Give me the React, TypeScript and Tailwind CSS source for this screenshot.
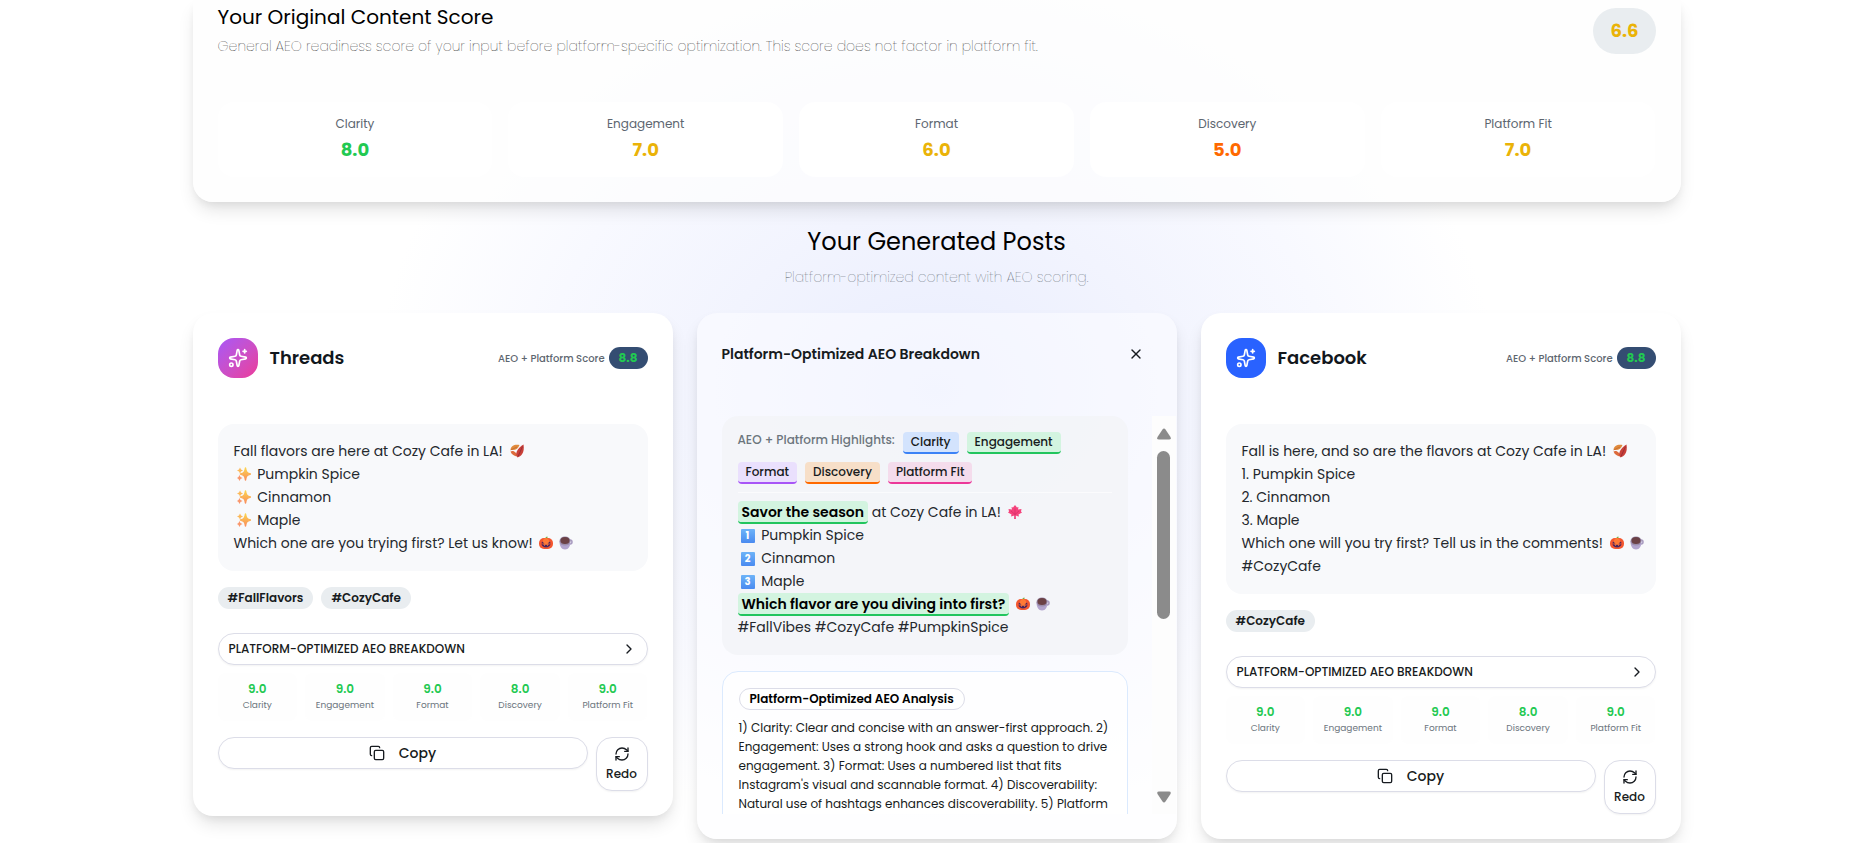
import { useState } from "react";
import type { ReactNode } from "react";
import { ChevronRight, Copy, RefreshCw, Sparkles, X } from "lucide-react";

type Score = { label: string; value: string; color: string };

const originalScores: Score[] = [
  { label: "Clarity", value: "8.0", color: "text-[#22c951]" },
  { label: "Engagement", value: "7.0", color: "text-[#eab308]" },
  { label: "Format", value: "6.0", color: "text-[#eab308]" },
  { label: "Discovery", value: "5.0", color: "text-[#ff6900]" },
  { label: "Platform Fit", value: "7.0", color: "text-[#eab308]" },
];

const postScores = [
  { label: "Clarity", value: "9.0" },
  { label: "Engagement", value: "9.0" },
  { label: "Format", value: "9.0" },
  { label: "Discovery", value: "8.0" },
  { label: "Platform Fit", value: "9.0" },
];

const highlights = [
  { label: "Clarity", className: "bg-[#d3e3fd] border-[#3b82f6]" },
  { label: "Engagement", className: "bg-[#d3f4e0] border-[#22c55e]" },
  { label: "Format", className: "bg-[#eae0fd] border-[#a855f7]" },
  { label: "Discovery", className: "bg-[#f7dfc8] border-[#ff6900]" },
  { label: "Platform Fit", className: "bg-[#f4dcec] border-[#ec3899]" },
];

const cardClass =
  "rounded-[20px] shadow-[0_10px_18px_-3px_rgba(0,0,0,0.12),0_4px_8px_-2px_rgba(0,0,0,0.06)]";

const emojiClass = "mx-[3px] inline-block size-[14px] align-[-2px]";

function FallenLeaf() {
  return (
    <svg viewBox="0 0 28 28" className={emojiClass} role="img" aria-label="fallen leaf">
      <path d="M1 11C2 4 9 0 19 2C17 9 11 13 3 12Z" fill="#e08a3c" />
      <path d="M1 12L14 6" stroke="#b9602b" strokeWidth="1.2" />
      <path d="M1 15C4 13 9 14 11 17L16 22L13 25C8 23 3 21 1 15Z" fill="#dd6b3b" />
      <path d="M27 1C29 13 26 24 15 27C9 20 14 9 27 1Z" fill="#c94038" />
      <path d="M25 5L16 25" stroke="#8f2a35" strokeWidth="1.6" />
    </svg>
  );
}

function MapleLeaf() {
  return (
    <svg viewBox="0 0 28 28" className={emojiClass} role="img" aria-label="maple leaf">
      <path
        d="M14 0L18 5L21 4L20 9L27 8L26 13L28 15L21 19L22 23L15 21L16 28H12L13 21L6 23L7 19L0 15L2 13L1 8L8 9L7 4L10 5Z"
        fill="#f5437c"
      />
      <path d="M14 7V25M14 19L6 12M14 19L22 12" stroke="#d92b68" strokeWidth="1.4" fill="none" />
    </svg>
  );
}

function Stars() {
  return (
    <svg viewBox="0 0 28 28" className={emojiClass} role="img" aria-label="sparkles">
      <defs>
        <linearGradient id="star" x1="0" y1="0" x2="0" y2="1">
          <stop offset="0" stopColor="#fcd34d" />
          <stop offset="1" stopColor="#f98e5c" />
        </linearGradient>
      </defs>
      <path
        d="M17 2C18 10 20 12 27 14C20 16 18 18 17 26C16 18 14 16 7 14C14 12 16 10 17 2Z"
        fill="url(#star)"
        stroke="url(#star)"
        strokeWidth="3"
        strokeLinejoin="round"
      />
      <path d="M6 1L8 5L12 7L8 9L6 13L4 9L0 7L4 5Z" fill="#fbb95a" />
      <path d="M5 16L7 20L11 22L7 24L5 28L3 24L0 22L3 20Z" fill="#f9966b" />
    </svg>
  );
}

function Pumpkin() {
  return (
    <svg viewBox="0 0 28 28" className={emojiClass} role="img" aria-label="jack-o-lantern">
      <path d="M13 6C12 3 14 1 17 1L17 6Z" fill="#7cab45" />
      <rect x="0" y="4" width="28" height="22" rx="10" fill="#f4572f" />
      <ellipse cx="14" cy="14" rx="7" ry="10" fill="#ff7a35" />
      <path d="M6 11L11 15H5ZM22 11L17 15H23Z" fill="#45225f" />
      <path d="M5 16C8 18 20 18 23 16C22 25 6 25 5 16Z" fill="#45225f" />
      <path d="M9 17L11 20L13 17M15 17L17 20L19 17" fill="#ff7a35" />
    </svg>
  );
}

function Coffee() {
  return (
    <svg viewBox="0 0 28 28" className={emojiClass} role="img" aria-label="hot beverage">
      <circle cx="22" cy="12" r="4" fill="none" stroke="#a79abf" strokeWidth="3" />
      <path d="M1 10C1 21 5 27 12 27C19 27 23 21 23 10Z" fill="#b3a5cf" />
      <ellipse cx="12" cy="10" rx="11" ry="9" fill="#9a8cab" />
      <ellipse cx="12" cy="9" rx="9" ry="7" fill="#6b4146" />
    </svg>
  );
}

function Keycap({ digit }: { digit: string }) {
  return (
    <span className="mx-[3px] inline-flex size-[14px] items-center justify-center rounded-[1px] bg-gradient-to-b from-[#6db3f8] to-[#4a8af0] align-[1px] text-[10px] leading-none font-bold text-white">
      {digit}
    </span>
  );
}

function Mark({ children }: { children: ReactNode }) {
  return (
    <mark className="rounded-[4px] border-b-2 border-[#22c55e] bg-[#d3f4e0] px-1 pt-px font-semibold text-black">
      {children}
    </mark>
  );
}

function PostCard({
  name,
  iconClass,
  tags,
  children,
}: {
  name: string;
  iconClass: string;
  tags: string[];
  children: ReactNode;
}) {
  return (
    <article className={`${cardClass} self-start bg-white p-[25px]`}>
      <header className="flex items-center justify-between">
        <div className="flex items-center gap-3">
          <div className={`${iconClass} flex size-10 items-center justify-center rounded-2xl text-white`}>
            <Sparkles size={20} />
          </div>
          <h3 className="text-lg font-semibold text-[#12171d]">{name}</h3>
        </div>
        <div className="flex items-center gap-1">
          <span className="text-[10px] font-medium text-[#5d6670]">AEO + Platform Score</span>
          <span className="rounded-full bg-[#344d72] px-[10px] py-[3px] text-xs font-bold text-[#22c951]">8.8</span>
        </div>
      </header>

      <div className="mt-[46px] rounded-2xl bg-[#f8f9fb] p-4 text-sm leading-[23px] whitespace-nowrap text-[#24282d]">
        {children}
      </div>

      <div className="mt-4 flex gap-2">
        {tags.map((tag) => (
          <span key={tag} className="rounded-full bg-[#e9edf0] px-[10px] py-[3px] text-xs font-semibold text-[#171b20]">
            {tag}
          </span>
        ))}
      </div>

      <button className="mt-6 flex h-8 w-full items-center justify-between rounded-2xl border border-[#dcdde8] bg-white px-[10px] text-xs font-medium text-[#171b20] shadow-xs">
        PLATFORM-OPTIMIZED AEO BREAKDOWN
        <ChevronRight size={16} />
      </button>

      <div className="mt-2 grid grid-cols-5 gap-2">
        {postScores.map((score) => (
          <div key={score.label} className="rounded-lg bg-[#fefefe] py-2 text-center">
            <div className="text-xs font-semibold text-[#22c951]">{score.value}</div>
            <div className="text-[9px] leading-4 text-[#6c757d]">{score.label}</div>
          </div>
        ))}
      </div>

      <div className="mt-4 flex items-start gap-2">
        <button className="flex h-8 flex-1 items-center justify-center gap-[14px] rounded-2xl border border-[#dcdde8] bg-white text-sm font-medium text-[#171b20] shadow-xs">
          <Copy size={16} />
          Copy
        </button>
        <button className="flex w-[52px] flex-col items-center gap-1 rounded-2xl border border-[#dcdde8] bg-white py-2 text-xs font-medium text-[#171b20] shadow-xs">
          <RefreshCw size={16} />
          Redo
        </button>
      </div>
    </article>
  );
}

function BreakdownCard({ onClose }: { onClose: () => void }) {
  return (
    <article className={`${cardClass} flex flex-col bg-[#fdfdff]/50 p-[25px]`}>
      <header className="flex items-center justify-between">
        <h3 className="text-sm font-semibold text-[#171b20]">Platform-Optimized AEO Breakdown</h3>
        <button aria-label="Close" className="flex size-8 items-center justify-center text-[#171b20]" onClick={onClose}>
          <X size={16} />
        </button>
      </header>

      <div className="mt-[46px] -mr-6 flex min-h-0 flex-1 basis-0">
        <div className="mr-6 min-w-0 flex-1 overflow-y-auto [scrollbar-width:none]">
          <div className="rounded-2xl bg-[#f3f4f7]/80 p-4">
            <div className="flex flex-wrap gap-2 border-b border-white/60 pb-2 text-xs font-medium">
              <span className="text-[#6c757d]">AEO + Platform Highlights:</span>
              {highlights.map((item) => (
                <span key={item.label} className={`${item.className} rounded-[4px] border-b-2 px-2 py-[2px] text-[#171b20]`}>
                  {item.label}
                </span>
              ))}
            </div>
            <div className="mt-2 text-sm leading-[23px] text-[#24282d]">
              <p>
                <Mark>Savor the season</Mark> at Cozy Cafe in LA! <MapleLeaf />
              </p>
              <p>
                <Keycap digit="1" /> Pumpkin Spice
              </p>
              <p>
                <Keycap digit="2" /> Cinnamon
              </p>
              <p>
                <Keycap digit="3" /> Maple
              </p>
              <p>
                <Mark>Which flavor are you diving into first?</Mark> <Pumpkin />
                <Coffee />
              </p>
              <p>#FallVibes #CozyCafe #PumpkinSpice</p>
            </div>
          </div>

          <div className="mt-4 rounded-2xl border border-[#dbeafe] bg-white/80 p-4">
            <div className="w-fit rounded-full border border-[#dcdde8] bg-white px-[10px] py-[2px] text-xs font-semibold text-black">
              Platform-Optimized AEO Analysis
            </div>
            <p className="mt-2 text-xs leading-[19px] text-[#171b20]">
              1) Clarity: Clear and concise with an answer-first approach. 2)
              Engagement: Uses a strong hook and asks a question to drive
              engagement. 3) Format: Uses a numbered list that fits
              Instagram's visual and scannable format. 4) Discoverability:
              Natural use of hashtags enhances discoverability. 5) Platform
            </p>
          </div>
        </div>

        <div className="flex w-6 flex-col items-center bg-[#fdfdfd]/90 pt-3 pb-[11px]">
          <svg viewBox="0 0 14 12" className="h-3 w-[14px] fill-[#8b8b8b]">
            <path d="M5.500 1.500Q7-.5 8.500 1.500L13.500 9Q14.500 11.500 12 11.500H2Q-.5 11.500.5 9Z" />
          </svg>
          <div className="mt-[11px] h-[168px] w-[13px] rounded-full bg-[#8b8b8b]" />
          <svg viewBox="0 0 14 12" className="mt-auto h-3 w-[14px] fill-[#8b8b8b]">
            <path d="M5.500 10.500Q7 12.500 8.500 10.500L13.500 3Q14.500.5 12 .5H2Q-.5.5.5 3Z" />
          </svg>
        </div>
      </div>
    </article>
  );
}

export default function App() {
  const [showBreakdown, setShowBreakdown] = useState(true);

  return (
    <div className="min-h-screen overflow-hidden bg-[radial-gradient(ellipse_560px_450px_at_50%_390px,#e9edfe_0%,#f2f4fe_40%,#f8f9ff_70%,#ffffff_100%)] pb-4 font-['Poppins','Inter',sans-serif]">
      <main className="mx-auto max-w-[1536px] px-6">
        <section className={`${cardClass} rounded-t-none bg-[#fdfdfd]/70 px-[25px] pt-[3px] pb-[25px]`}>
          <div className="flex items-center justify-between">
            <div>
              <h2 className="text-xl leading-7 text-black">Your Original Content Score</h2>
              <p className="mt-[3px] text-sm leading-6 font-extralight text-black">
                General AEO readiness score of your input before platform-specific optimization. This score does not
                factor in platform fit.
              </p>
            </div>
            <span className="rounded-full bg-[#e9edf0] px-[17px] py-[9px] text-lg leading-7 font-bold text-[#eab308]">6.6</span>
          </div>
          <div className="mt-11 grid grid-cols-5 gap-4">
            {originalScores.map((score) => (
              <div key={score.label} className="rounded-2xl bg-white/90 pt-3 pb-[13px] text-center">
                <div className="text-xs leading-5 text-[#5d6670]">{score.label}</div>
                <div className={`${score.color} mt-[2px] text-lg leading-7 font-bold`}>{score.value}</div>
              </div>
            ))}
          </div>
        </section>

        <div className="mt-6 mb-[25px] text-center">
          <h2 className="text-2xl text-black">Your Generated Posts</h2>
          <p className="mt-2 text-sm leading-[22px] font-extralight text-[#4b535c]">Platform-optimized content with AEO scoring.</p>
        </div>

        <div className="grid grid-cols-3 gap-6">
          <PostCard
            name="Threads"
            iconClass="bg-gradient-to-br from-[#a855f7] to-[#ec3899]"
            tags={["#FallFlavors", "#CozyCafe"]}
          >
            <p>
              Fall flavors are here at Cozy Cafe in LA! <FallenLeaf />
            </p>
            <p>
              <Stars /> Pumpkin Spice
            </p>
            <p>
              <Stars /> Cinnamon
            </p>
            <p>
              <Stars /> Maple
            </p>
            <p>
              Which one are you trying first? Let us know! <Pumpkin />
              <Coffee />
            </p>
          </PostCard>

          {showBreakdown && <BreakdownCard onClose={() => setShowBreakdown(false)} />}

          <PostCard name="Facebook" iconClass="bg-[#2962ff]" tags={["#CozyCafe"]}>
            <p>
              Fall is here, and so are the flavors at Cozy Cafe in LA! <FallenLeaf />
            </p>
            <p>1. Pumpkin Spice</p>
            <p>2. Cinnamon</p>
            <p>3. Maple</p>
            <p>
              Which one will you try first? Tell us in the comments! <Pumpkin />
              <Coffee />
            </p>
            <p>#CozyCafe</p>
          </PostCard>
        </div>
      </main>
    </div>
  );
}
